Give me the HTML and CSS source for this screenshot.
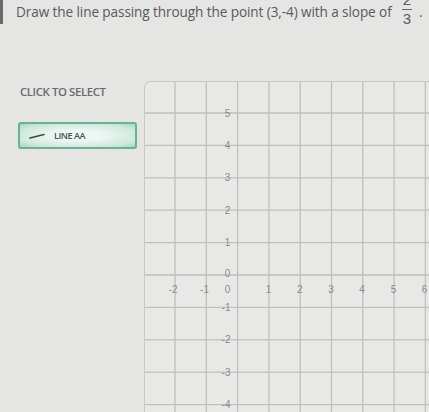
FILE: index.html
```html
<!DOCTYPE html>
<html>
<head>
<meta charset="utf-8">
<link rel="stylesheet" href="styles.css">
</head>
<body>
<div class="page">
  <header class="question">
    <span class="qtext">Draw the line passing through the point (3,-4) with a slope of</span>
    <span class="frac"><span class="num">2</span><span class="den">3</span></span><span class="dot">.</span>
  </header>
  <main class="work">
    <aside class="tools">
      <div class="tools-title">CLICK TO SELECT</div>
      <button class="tool-btn">
        <svg class="tool-icon" width="16" height="6" viewBox="0 0 16 6"><line x1="1" y1="5" x2="15" y2="1.5" stroke="#3d4a46" stroke-width="1.6" stroke-linecap="round"/></svg>
        <span>LINE AA</span>
      </button>
    </aside>
    <section class="graph">
      <svg class="grid" width="300" height="340" viewBox="0 0 300 340">
        <g stroke="#bfbfbd" stroke-width="1.3">
          <line x1="31" y1="0" x2="31" y2="340"/>
          <line x1="62.3" y1="0" x2="62.3" y2="340"/>
          <line x1="93.6" y1="0" x2="93.6" y2="340"/>
          <line x1="124.9" y1="0" x2="124.9" y2="340"/>
          <line x1="156.2" y1="0" x2="156.2" y2="340"/>
          <line x1="187.5" y1="0" x2="187.5" y2="340"/>
          <line x1="218.8" y1="0" x2="218.8" y2="340"/>
          <line x1="250.1" y1="0" x2="250.1" y2="340"/>
          <line x1="281.4" y1="0" x2="281.4" y2="340"/>
          <line x1="0" y1="32" x2="300" y2="32"/>
          <line x1="0" y1="64.4" x2="300" y2="64.4"/>
          <line x1="0" y1="96.8" x2="300" y2="96.8"/>
          <line x1="0" y1="129.2" x2="300" y2="129.2"/>
          <line x1="0" y1="161.6" x2="300" y2="161.6"/>
          <line x1="0" y1="194" x2="300" y2="194"/>
          <line x1="0" y1="226.4" x2="300" y2="226.4"/>
          <line x1="0" y1="258.8" x2="300" y2="258.8"/>
          <line x1="0" y1="291.2" x2="300" y2="291.2"/>
          <line x1="0" y1="323.6" x2="300" y2="323.6"/>
        </g>
        <g class="lbl" text-anchor="middle">
          <text x="83.5" y="35.5">5</text>
          <text x="83.5" y="68">4</text>
          <text x="83.5" y="100.3">3</text>
          <text x="83.5" y="132.7">2</text>
          <text x="83.5" y="165">1</text>
          <text x="83.5" y="195.5">0</text>
          <text x="82" y="229.9">-1</text>
          <text x="82" y="262.3">-2</text>
          <text x="82" y="294.7">-3</text>
          <text x="82" y="327.1">-4</text>
          <text x="29" y="211.5">-2</text>
          <text x="60.5" y="211.5">-1</text>
          <text x="83.5" y="211.5">0</text>
          <text x="124.5" y="211.5">1</text>
          <text x="155.8" y="211.5">2</text>
          <text x="187" y="211.5">3</text>
          <text x="218" y="211.5">4</text>
          <text x="249.5" y="211.5">5</text>
          <text x="280.5" y="211.5">6</text>
        </g>
      </svg>
    </section>
  </main>
</div>
</body>
</html>
```

FILE: styles.css
```css
html, body {
  margin: 0;
  padding: 0;
}
body {
  background: #e5e5e3;
  font-family: "Open Sans", "Liberation Sans", sans-serif;
  width: 429px;
  height: 412px;
  overflow: hidden;
}
.page {
  display: flex;
  flex-direction: column;
  height: 412px;
}
.question {
  position: relative;
  height: 81px;
  flex: none;
  padding-left: 16px;
  display: flex;
  align-items: flex-start;
  color: #5a5a5a;
  font-size: 13.6px;
}
.question::before {
  content: "";
  position: absolute;
  left: 0;
  top: 0;
  width: 3px;
  height: 24px;
  background: #6a6a6a;
}
.qtext {
  margin-top: 2px;
  letter-spacing: -0.1px;
}
.frac {
  display: flex;
  flex-direction: column;
  align-items: center;
  margin-left: 10px;
  margin-top: -8px;
  font-family: "Liberation Sans", sans-serif;
  font-size: 15px;
  line-height: 16px;
}
.num {
  border-bottom: 1px solid #6a6a6a;
  padding: 0 1px 1px;
}
.den {
  padding-top: 1px;
}
.dot {
  margin-left: 7px;
  margin-top: 2px;
}
.work {
  display: flex;
  flex: 1;
  min-height: 0;
}
.tools {
  width: 144px;
  flex: none;
  padding-top: 3px;
  box-sizing: border-box;
}
.tools-title {
  margin-left: 20px;
  font-size: 11.4px;
  font-weight: 600;
  color: #6a6a6a;
  letter-spacing: -0.4px;
  line-height: 16px;
}
.tool-btn {
  margin: 22px 0 0 18px;
  width: 119px;
  height: 27px;
  box-sizing: border-box;
  border: 2px solid #66b39a;
  border-radius: 3px;
  background: radial-gradient(ellipse at 50% 50%, #eef7f3 30%, #cfe8de 75%, #a9d6c5 100%);
  display: flex;
  align-items: center;
  padding: 0 0 0 9px;
  gap: 9px;
  font-family: "Open Sans", "Liberation Sans", sans-serif;
  font-size: 9.2px;
  font-weight: 600;
  color: #45554f;
  letter-spacing: -0.5px;
  cursor: pointer;
}
.tool-icon {
  flex: none;
}
.graph {
  flex: 1;
  border-left: 1px solid #c9c9c7;
  border-top: 1px solid #c9c9c7;
  border-top-left-radius: 7px;
  background: #e8e9e7;
  overflow: hidden;
}
.grid {
  display: block;
  margin-top: -1px;
  margin-left: -1px;
}
.lbl text {
  font-family: "Liberation Sans", Arial, sans-serif;
  font-size: 10px;
  fill: #8a8a8a;
}
```
